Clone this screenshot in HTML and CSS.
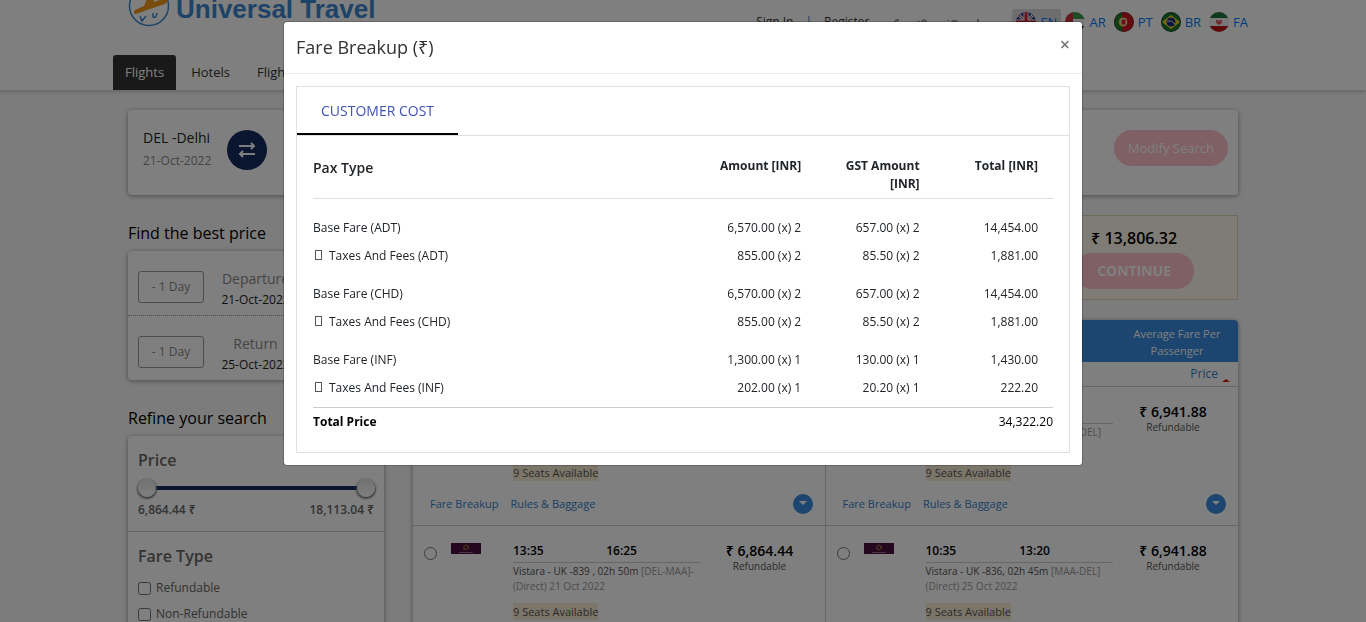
FILE: index.html
```html
<!DOCTYPE html>
<html lang="en">
<head>
<meta charset="utf-8">
<meta name="viewport" content="width=device-width, initial-scale=1">
<title>Universal Travel</title>
<link rel="stylesheet" href="styles.css">
</head>
<body>
<header class="site-header">
  <div class="header-inner">
    <div class="header-top">
      <a class="brand" href="#">
        <svg class="brand-mark" width="42" height="42" viewBox="0 0 42 42" fill="none">
          <circle cx="21" cy="21" r="19.500" stroke="#3a86d0" stroke-width="1.500"/>
          <path d="M12 31l2 5 4-5M25 28v4q3 2 4-4" stroke="#3a86d0" stroke-width="1.500"/>
          <path d="M7 25l9-4 5-12 4-1 1 9 9-3c3-1 5-1 5 1 0 3-5 5-9 6l-12 4-11 4c-2 0-3-2-1-4z" fill="#f09818"/>
        </svg>
        <span class="brand-name">Universal Travel</span>
      </a>
      <div class="account">
        <a href="#">Sign In</a><span class="bar">|</span><a href="#">Register</a>
        <span class="social">
          <svg width="10" height="10" viewBox="0 0 10 10"><path d="M8 1H7C5 1 4 2 4 4v6M2 5h5" fill="none" stroke="#999" stroke-width="2"/></svg>
          <svg width="12" height="10" viewBox="0 0 12 10"><path d="M1 9c6 1 8-3 8-6 0-2-4-3-4 1C4 5 2 4 1 2" fill="none" stroke="#999" stroke-width="2"/></svg>
          <svg width="14" height="10" viewBox="0 0 14 10"><path d="M3 4v6M3 1v1M7 10V4c0-3 5-3 5 0v6" fill="none" stroke="#999" stroke-width="2"/></svg>
          <svg width="6" height="10" viewBox="0 0 6 10"><path d="M3 0v10" stroke="#999" stroke-width="2"/></svg>
        </span>
      </div>
      <nav class="languages" aria-label="Language">
        <a class="lang lang-on" href="#">
          <svg class="flag" viewBox="0 0 20 20"><clipPath id="c"><circle cx="10" cy="10" r="10"/></clipPath><g clip-path="url(#c)"><path fill="#2b3c92" d="M0 0h20v20H0z"/><path d="M1 1l18 18M19 1L1 19" stroke="#eee" stroke-width="3"/><path d="M1 1l18 18M19 1L1 19" stroke="#c22438" stroke-width="1"/><path d="M10 0v20M0 10h20" stroke="#eee" stroke-width="5"/><path d="M10 0v20M0 10h20" stroke="#d2203a" stroke-width="3"/></g></svg>EN</a>
        <a class="lang" href="#">
          <svg class="flag" viewBox="0 0 20 20"><g clip-path="url(#c)"><path fill="#f4f4f4" d="M0 0h20v20H0z"/><path fill="#3b9a48" d="M0 0h20v7H0z"/><path fill="#222" d="M0 14h20v7H0z"/><path fill="#d02e3c" d="M0 0h8v20H0z"/></g></svg>AR</a>
        <a class="lang" href="#">
          <svg class="flag" viewBox="0 0 20 20"><g clip-path="url(#c)"><path fill="#cf1322" d="M0 0h20v20H0z"/><path fill="#1e7a2c" d="M0 0h8v20H0z"/><circle cx="9" cy="10" r="4.500" fill="#d7c033"/><path d="M7 7h5v4c0 3-5 3-5 0z" fill="#d31a2a" stroke="#f6f0e8"/><circle cx="10" cy="10" r="9.500" fill="none" stroke="#333" opacity=".6"/></g></svg>PT</a>
        <a class="lang" href="#">
          <svg class="flag" viewBox="0 0 20 20"><g clip-path="url(#c)"><path fill="#16782d" d="M0 0h20v20H0z"/><path fill="#f3d11c" d="M10 3l9 7-9 7-9-7z"/><circle cx="10" cy="10" r="4.500" fill="#1d2b80"/><path d="M6 9q5-1 8 3" stroke="#ddd" fill="none"/><circle cx="10" cy="10" r="9.500" fill="none" stroke="#222" opacity=".6"/></g></svg>BR</a>
        <a class="lang" href="#">
          <svg class="flag" viewBox="0 0 20 20"><g clip-path="url(#c)"><path fill="#f2f2f2" d="M0 0h20v20H0z"/><path fill="#21743a" d="M0 0h20v6H0z"/><path fill="#b80f14" d="M0 14h20v6H0z"/><path d="M8 8q-1 3 2 4 3-1 2-4M10 8v4" fill="none" stroke="#d8434a" stroke-width="1.500"/></g></svg>FA</a>
      </nav>
    </div>
    <nav class="main-nav">
      <a class="nav-link nav-on" href="#">Flights</a>
      <a class="nav-link" href="#">Hotels</a>
      <a class="nav-link" href="#">Flight</a>
    </nav>
  </div>
</header>

<main class="page">
  <section class="card search">
    <div class="stop"><div class="stop-city">DEL -Delhi</div><div class="stop-date">21-Oct-2022</div></div>
    <div class="swap">
      <svg width="18" height="18" viewBox="0 0 18 18" fill="none" stroke="#fff" stroke-width="2"><path d="M1 5h15M13 2l3 3-3 3M17 13H2M5 10l-3 3 3 3"/></svg>
    </div>
    <div class="stop"><div class="stop-city">MAA</div><div class="stop-date">25</div></div>
    <button class="pill modify" type="button">Modify Search</button>
  </section>

  <div class="columns">
    <aside class="sidebar">
      <h2 class="side-title">Find the best price</h2>
      <section class="card">
        <div class="day-row"><button class="day" type="button">- 1 Day</button><div class="day-info"><div class="day-name">Departure</div><div class="day-date">21-Oct-2022</div></div></div>
        <div class="day-row"><button class="day" type="button">- 1 Day</button><div class="day-info"><div class="day-name">Return</div><div class="day-date">25-Oct-2022</div></div></div>
      </section>
      <h2 class="side-title">Refine your search</h2>
      <section class="card">
        <div class="filter">
          <h3 class="filter-title">Price</h3>
          <div class="range">
            <input type="range" min="0" max="100" value="0" aria-label="Lowest price">
            <input type="range" min="0" max="100" value="100" aria-label="Highest price">
          </div>
          <div class="range-values"><span>6,864.44 ₹</span><span>18,113.04 ₹</span></div>
        </div>
        <div class="filter">
          <h3 class="filter-title">Fare Type</h3>
          <label class="check"><input type="checkbox">Refundable</label>
          <label class="check"><input type="checkbox">Non-Refundable</label>
        </div>
      </section>
    </aside>

    <div class="results">
      <section class="selection">
        <div class="selection-total">
          <div class="selection-price">₹ 13,806.32</div>
          <button class="pill continue" type="button">CONTINUE</button>
        </div>
      </section>
      <section class="card list">
        <div class="list-head"><span>Average Fare Per Passenger</span></div>
        <div class="list-sort"><a href="#">Price</a><i class="sort-arrow"></i></div>
        <div class="flights">
          <article class="flight">
            <div class="flight-main">
              <div class="pick"></div>
              <div class="trip">
                <div class="times"></div>
                <div class="detail"></div>
                <span class="seats">9 Seats Available</span>
              </div>
              <div class="fare"></div>
            </div>
            <div class="flight-foot"><a href="#">Fare Breakup</a><a href="#">Rules &amp; Baggage</a><button class="more" type="button" aria-label="Details"></button></div>
          </article>
          <article class="flight">
            <div class="flight-main">
              <div class="pick"></div>
              <div class="trip">
                <div class="times"></div>
                <div class="detail detail-end">[MAA-DEL]</div>
                <span class="seats">9 Seats Available</span>
              </div>
              <div class="fare"><div class="fare-price">₹ 6,941.88</div><div class="fare-note">Refundable</div></div>
            </div>
            <div class="flight-foot"><a href="#">Fare Breakup</a><a href="#">Rules &amp; Baggage</a><button class="more" type="button" aria-label="Details"></button></div>
          </article>
          <article class="flight flight-last">
            <div class="flight-main">
              <div class="pick"><input type="radio" name="out" aria-label="13:35 to 16:25">
                <svg width="30" height="11" viewBox="0 0 30 11"><path fill="#4a1040" d="M0 0h30v11H0z"/><circle cx="15" cy="4.500" r="2.200" fill="none" stroke="#a67845" stroke-width="1.500" stroke-dasharray="1.500 .6"/><path d="M8 9.500h14" stroke="#a38aa0" stroke-dasharray="1.500 .5"/></svg></div>
              <div class="trip">
                <div class="times"><span>13:35</span><span>16:25</span></div>
                <div class="detail"><b>Vistara - UK -839 , 02h 50m</b> [DEL-MAA]-<br>(Direct) 21 Oct 2022</div>
                <span class="seats">9 Seats Available</span>
              </div>
              <div class="fare"><div class="fare-price">₹ 6,864.44</div><div class="fare-note">Refundable</div></div>
            </div>
          </article>
          <article class="flight flight-last">
            <div class="flight-main">
              <div class="pick"><input type="radio" name="back" aria-label="10:35 to 13:20">
                <svg width="30" height="11" viewBox="0 0 30 11"><path fill="#4a1040" d="M0 0h30v11H0z"/><circle cx="15" cy="4.500" r="2.200" fill="none" stroke="#a67845" stroke-width="1.500" stroke-dasharray="1.500 .6"/><path d="M8 9.500h14" stroke="#a38aa0" stroke-dasharray="1.500 .5"/></svg></div>
              <div class="trip">
                <div class="times"><span>10:35</span><span>13:20</span></div>
                <div class="detail"><b>Vistara - UK -836, 02h 45m</b> [MAA-DEL]<br>(Direct) 25 Oct 2022</div>
                <span class="seats">9 Seats Available</span>
              </div>
              <div class="fare"><div class="fare-price">₹ 6,941.88</div><div class="fare-note">Refundable</div></div>
            </div>
          </article>
        </div>
      </section>
    </div>
  </div>
</main>

<div class="backdrop">
  <div class="modal" role="dialog" aria-modal="true" aria-labelledby="modal-title">
    <div class="modal-head">
      <h1 class="modal-title" id="modal-title">Fare Breakup (₹)</h1>
      <button class="close" type="button" aria-label="Close">×</button>
    </div>
    <div class="modal-body">
      <div class="panel">
        <div class="tabs" role="tablist"><button class="tab" type="button" role="tab" aria-selected="true">CUSTOMER COST</button></div>
        <div class="panel-body">
          <table class="cost">
            <thead><tr><th>Pax Type</th><th>Amount [INR]</th><th>GST Amount [INR]</th><th>Total [INR]</th></tr></thead>
            <tbody>
              <tr><td>Base Fare (ADT)</td><td>6,570.00 (x) 2</td><td>657.00 (x) 2</td><td>14,454.00</td></tr>
              <tr><td><i class="mark"></i>Taxes And Fees (ADT)</td><td>855.00 (x) 2</td><td>85.50 (x) 2</td><td>1,881.00</td></tr>
            </tbody>
            <tbody>
              <tr><td>Base Fare (CHD)</td><td>6,570.00 (x) 2</td><td>657.00 (x) 2</td><td>14,454.00</td></tr>
              <tr><td><i class="mark"></i>Taxes And Fees (CHD)</td><td>855.00 (x) 2</td><td>85.50 (x) 2</td><td>1,881.00</td></tr>
            </tbody>
            <tbody>
              <tr><td>Base Fare (INF)</td><td>1,300.00 (x) 1</td><td>130.00 (x) 1</td><td>1,430.00</td></tr>
              <tr><td><i class="mark"></i>Taxes And Fees (INF)</td><td>202.00 (x) 1</td><td>20.20 (x) 1</td><td>222.20</td></tr>
            </tbody>
            <tfoot><tr><th colspan="3">Total Price</th><td>34,322.20</td></tr></tfoot>
          </table>
        </div>
      </div>
    </div>
  </div>
</div>
</body>
</html>
```

FILE: styles.css
```css
* { box-sizing: border-box; }
html { overflow: hidden; }
body {
  margin: 0;
  background: #f9f9f9;
  color: #212529;
  font: 12px/18px "Open Sans", "Noto Sans", sans-serif;
}
a { color: inherit; text-decoration: none; }
button, input { font: inherit; color: inherit; margin: 0; }
h1, h2, h3 { margin: 0; font-weight: 400; }

/* header */
.site-header {
  background: #fff;
  border-bottom: 1px solid #ddd;
  box-shadow: 0 1px 3px rgba(0, 0, 0, .2);
}
.header-inner { max-width: 1140px; margin: 0 auto; }
.header-top { display: flex; align-items: flex-start; height: 55px; padding-left: 15px; }
.brand { display: flex; align-items: center; gap: 6px; margin-top: -18px; color: #3a86d0; }
.brand-name { font: bold 26px/40px "Liberation Sans", Arial, sans-serif; padding-top: 7px; }
.account {
  display: flex;
  align-items: center;
  margin: 13px 31px 0 auto;
  font-size: 12px;
  color: #333;
}
.bar { margin: 0 12px; color: #3a62b0; }
.social { display: flex; gap: 16px; padding-top: 4px; margin-left: 22px; }
.languages { display: flex; margin: 9px 1px 0 0; font-size: 13px; color: #007bff; }
.lang { display: flex; align-items: center; gap: 4px; height: 26px; padding: 0 4px; }
.lang-on { background: #ddd; border-radius: 3px; }
.flag { width: 20px; height: 20px; }
.main-nav { display: flex; gap: 3px; }
.nav-link {
  padding: 0 12px;
  font-size: 13px;
  line-height: 35px;
  color: #333;
}
.nav-on { background: #333; color: #fff; border-radius: 3px 3px 0 0; }

/* page */
.page { max-width: 1110px; margin: 19px auto 0; }
.card { background: #fff; border-radius: 4px; box-shadow: 0 1px 5px rgba(0, 0, 0, .4); }
.search { display: flex; align-items: flex-start; padding: 20px 10px 25px 15px; gap: 16px; }
.stop-city { font-size: 14px; line-height: 16px; }
.stop-date { margin-top: 6px; color: #888; }
.swap {
  display: flex;
  align-items: center;
  justify-content: center;
  width: 40px;
  height: 40px;
  border-radius: 50%;
  background: #142b60;
}
.pill {
  height: 36px;
  border: 0;
  border-radius: 18px;
  background: #ffc0cb;
  color: #fff;
  text-align: center;
}
.modify { margin-left: auto; padding: 0 14px; font-size: 13px; }
.columns { display: flex; gap: 29px; margin-top: 20px; }
.sidebar { flex: 0 0 256px; }
.side-title { font-size: 16px; line-height: 36px; color: #000; }
.side-title + .card + .side-title { margin-top: 20px; }
.day-row { display: flex; align-items: flex-start; padding: 20px 10px 7px; }
.day-row + .day-row { border-top: 1px dotted #999; }
.day {
  width: 66px;
  height: 32px;
  padding: 0;
  border: 1px solid #999;
  border-radius: 3px;
  background: transparent;
  color: #888;
}
.day-info { width: 103px; text-align: center; }
.day-name { font-size: 14px; line-height: 16px; color: #888; }
.day-date { line-height: 16px; margin-top: 5px; color: #222; }
.filter { padding: 14px 10px 12px; color: #666; }
.filter + .filter { border-top: 1px solid #ccc; }
.filter-title { font-size: 16px; line-height: 20px; font-weight: 600; color: #666; }
.range {
  display: flex;
  justify-content: space-between;
  height: 18px;
  margin: 9px -1px 4px 0;
  background: linear-gradient(#142b60, #142b60) center / calc(100% - 30px) 4px no-repeat;
}
.range input {
  appearance: none;
  width: 18px;
  height: 18px;
  background: transparent;
}
.range input::-webkit-slider-thumb {
  appearance: none;
  width: 18px;
  height: 18px;
  border: 1px solid #eee;
  border-radius: 50%;
  background: linear-gradient(#e4e4e4, #fff);
  box-shadow: 0 1px 2px 1px #777;
}
.range-values { display: flex; justify-content: space-between; font-weight: 600; }
.check { display: flex; align-items: center; gap: 5px; margin-top: 8px; }
.check input { width: 13px; height: 13px; }
.filter-title + .check { margin-top: 13px; }

/* results */
.results { flex: 1; min-width: 0; }
.selection {
  display: flex;
  justify-content: flex-end;
  padding: 12px 0 10px;
  border: 1px solid #e2d5b8;
  background: #fff6ea;
}
.selection-total { width: 25%; text-align: center; }
.selection-price { font-size: 16px; line-height: 20px; font-weight: 600; color: #000; }
.continue { width: 120px; margin-top: 5px; font-size: 14px; font-weight: 700; }
.list { margin-top: 20px; }
.list-head {
  display: flex;
  justify-content: flex-end;
  padding: 5px 0 3px;
  border-radius: 4px 4px 0 0;
  background: #388cde;
  color: #fff;
  font-size: 11px;
  line-height: 17px;
  text-align: center;
}
.list-head span { width: 122px; padding: 0 15px; }
.list-sort {
  display: flex;
  justify-content: flex-end;
  gap: 4px;
  height: 25px;
  padding: 3px 8px 0;
  border-bottom: 1px solid #ccc;
  color: #337fc8;
}
.sort-arrow { align-self: flex-end; margin-bottom: 4px; border: 4px solid transparent; border-top: 0; border-bottom: 3px solid #d01818; }
.flights { display: grid; grid-template-columns: 1fr 1fr; }
.flight { border-bottom: 1px solid #ccc; }
.flight:nth-child(odd) { border-right: 1px solid #ccc; }
.flight-last { padding-bottom: 43px; }
.flight-main { display: flex; padding: 16px 5px 0 11px; }
.pick { display: flex; align-items: flex-start; gap: 14px; width: 89px; }
.pick input { width: 13px; height: 13px; margin-top: 5px; }
.pick svg { margin-top: 1px; }
.trip { flex: 1; min-width: 0; }
.times {
  display: grid;
  grid-template-columns: 1fr 1fr;
  height: 21px;
  border-bottom: 1px solid #ccc;
  color: #000;
  font-weight: 600;
}
.detail { height: 32px; margin: 1px 0 7px; font-size: 10px; line-height: 15px; color: #999; }
.detail b { font-weight: 400; color: #555; }
.detail-end { text-align: right; padding-right: 12px; }
.seats { display: inline-block; background: #f9ebd2; color: #555; font-size: 11px; line-height: 17px; }
.fare { width: 120px; text-align: center; }
.fare-price { font-size: 14px; line-height: 18px; font-weight: 600; color: #000; }
.fare-note { font-size: 10px; line-height: 12px; color: #555; }
.flight-foot {
  display: flex;
  align-items: center;
  gap: 12px;
  padding: 12px 12px 11px 17px;
  color: #337fc8;
  font-size: 11px;
}
.more {
  display: flex;
  justify-content: center;
  width: 20px;
  height: 20px;
  margin-left: auto;
  padding: 7px 0 0;
  border: 0;
  border-radius: 50%;
  background: #388cde;
}
.more::before { content: ""; border: 4px solid transparent; border-bottom: 0; border-top-color: #fff; }

/* fare dialog */
.backdrop {
  position: fixed;
  inset: 0;
  padding: 21px 16px;
  overflow: hidden;
  background: rgba(0, 0, 0, .5);
}
.modal {
  max-width: 800px;
  margin: 0 auto;
  border: 1px solid rgba(0, 0, 0, .2);
  border-radius: 4px;
  background: #fff;
  background-clip: padding-box;
}
.modal-head {
  display: flex;
  align-items: flex-start;
  justify-content: space-between;
  padding: 12px;
  border-bottom: 1px solid #e9ecef;
}
.modal-title { font-size: 18px; line-height: 27px; color: #333; }
.close {
  padding: 0;
  border: 0;
  background: transparent;
  color: #777;
  font-size: 18px;
  line-height: 20px;
  font-weight: 600;
}
.modal-body { padding: 12px; }
.panel { border: 1px solid #dee2e6; }
.tabs { display: flex; border-bottom: 1px solid #dee2e6; }
.tab {
  height: 48px;
  padding: 2px 24px 0;
  border: 0;
  border-bottom: 2px solid #000;
  background: transparent;
  color: #3f51b5;
  font-size: 14px;
}
.panel-body { padding: 21px 16px 16px; }
.cost { width: 100%; border-spacing: 0; table-layout: fixed; }
.cost th, .cost td { padding: 5px 15px 5px 0; text-align: right; vertical-align: top; }
.cost th:first-child, .cost td:first-child { text-align: left; }
.cost thead th { width: 16%; padding: 0 15px 5px; border-bottom: 1px solid #ddd; font-weight: 700; }
.cost thead th:first-child { width: 52%; padding-left: 0; font-size: 14px; line-height: 22px; font-weight: 600; }
.cost tbody tr:first-child td { padding-top: 15px; }
.cost thead + tbody tr:first-child td { padding-top: 20px; }
.cost tbody:nth-last-child(2) tr:last-child td { padding-bottom: 10px; }
.cost tfoot th, .cost tfoot td { padding-right: 0; border-top: 1px solid #ccc; color: #000; }
.mark { display: inline-block; width: 7px; height: 10px; margin: 0 7px 0 2px; border: 1px solid #555; }
```
